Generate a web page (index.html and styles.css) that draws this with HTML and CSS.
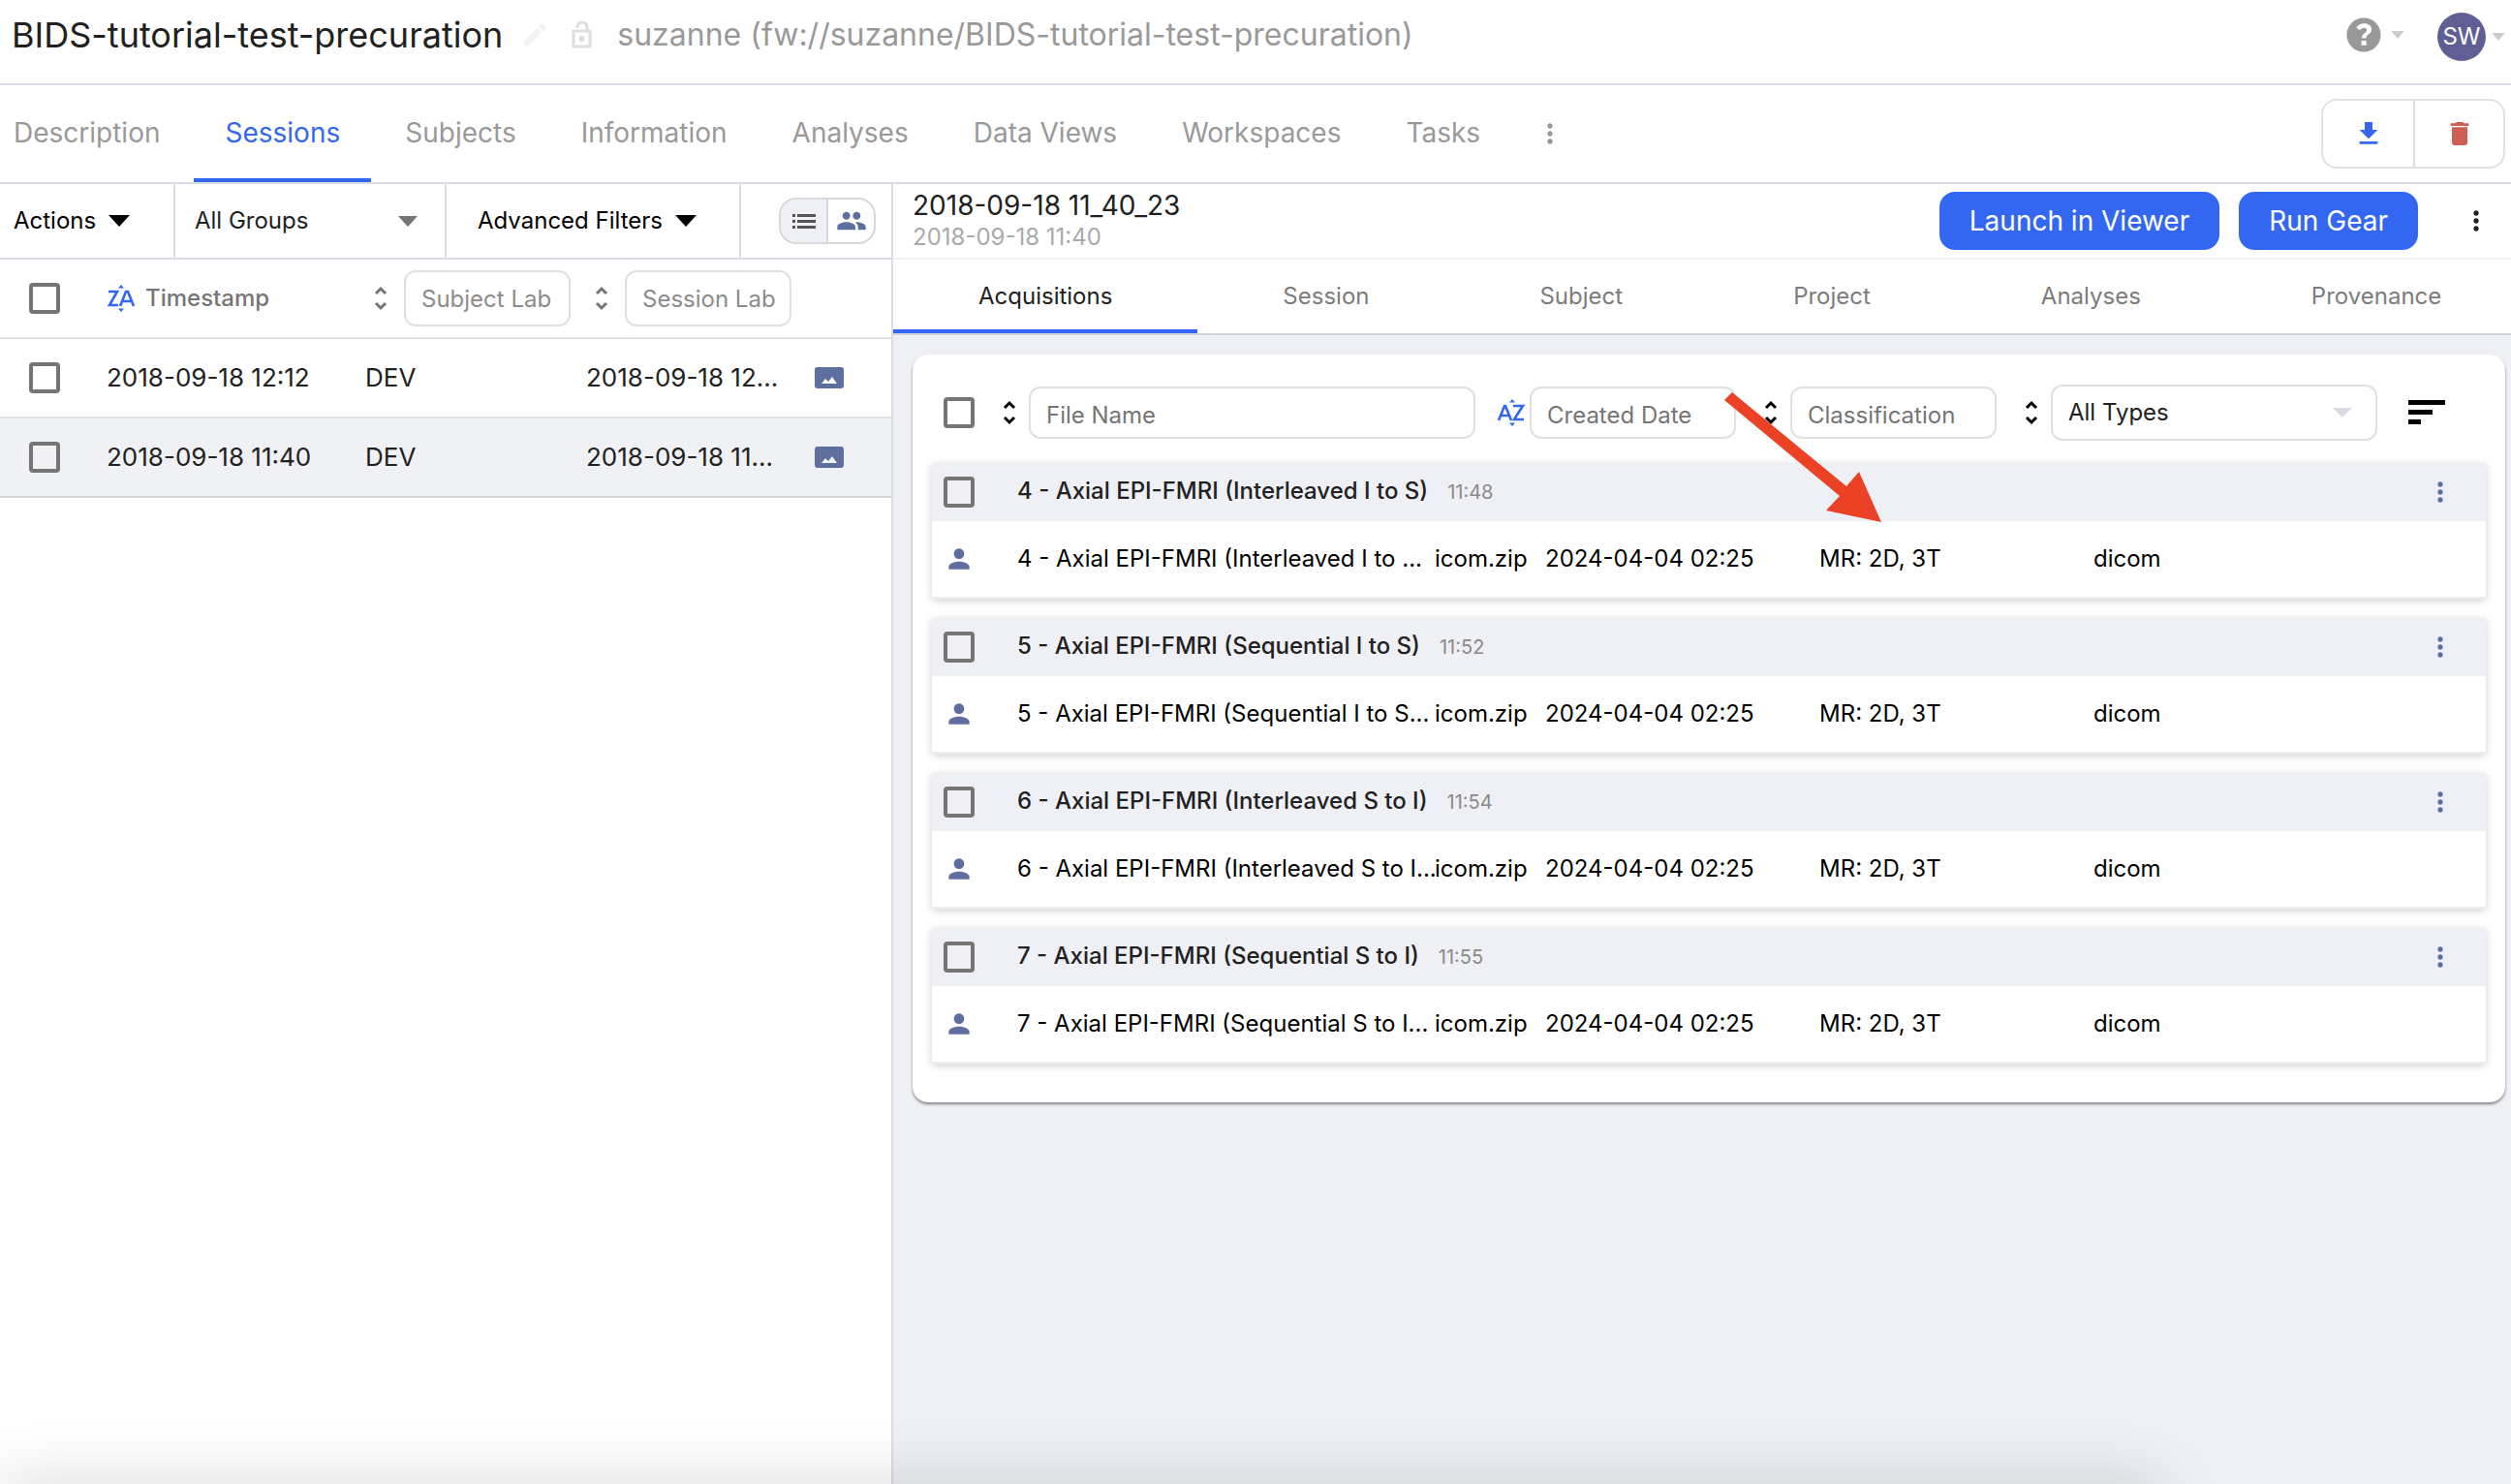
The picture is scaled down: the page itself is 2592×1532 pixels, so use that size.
FILE: index.html
```html
<!DOCTYPE html>
<html lang="en">
<head>
    <meta charset="UTF-8">
    <meta name="viewport" content="width=device-width, initial-scale=1">
    <title>BIDS-tutorial-test-precuration</title>
    <link rel="stylesheet" href="styles.css">
</head>
<body>

<!-- shared icons -->
<svg class="sprite" aria-hidden="true">
    <symbol id="i-dots" viewBox="0 0 24 24"><path d="M12 8c1.1 0 2-.9 2-2s-.9-2-2-2-2 .9-2 2 .9 2 2 2zm0 2c-1.1 0-2 .9-2 2s.9 2 2 2 2-.9 2-2-.9-2-2-2zm0 6c-1.1 0-2 .9-2 2s.9 2 2 2 2-.9 2-2-.9-2-2-2z"/></symbol>
    <symbol id="i-person" viewBox="0 0 24 24"><path d="M12 12c2.21 0 4-1.79 4-4s-1.79-4-4-4-4 1.79-4 4 1.79 4 4 4zm0 2c-2.67 0-8 1.34-8 4v2h16v-2c0-2.66-5.33-4-8-4z"/></symbol>
    <symbol id="i-sort" viewBox="0 0 16 28"><path d="M3 9l5-5 5 5M3 19l5 5 5-5" fill="none" stroke="currentColor" stroke-width="3"/></symbol>
    <symbol id="i-caret" viewBox="0 0 20 12"><path d="M0 0h20L10 12z"/></symbol>
    <symbol id="i-image" viewBox="0 0 30 22"><path fill-rule="evenodd" d="M3 0h24a3 3 0 0 1 3 3v16a3 3 0 0 1-3 3H3a3 3 0 0 1-3-3V3a3 3 0 0 1 3-3zm4 17h16l-5-7-4 5-3-3z"/></symbol>
</svg>

<header class="top">
    <h1>BIDS-tutorial-test-precuration</h1>
    <button class="icon-btn edit" aria-label="Edit"><svg width="30" height="30" viewBox="0 0 24 24"><path d="M3 17.25V21h3.75L17.81 9.94l-3.75-3.75L3 17.25zM20.71 7.04c.39-.39.39-1.02 0-1.41l-2.34-2.34c-.39-.39-1.02-.39-1.41 0l-1.83 1.83 3.75 3.75 1.83-1.83z"/></svg></button>
    <svg class="lock" width="24" height="30" viewBox="0 0 24 30"><path d="M7 8V7a5 5 0 0 1 10 0V11M3 11h17v16H3z" fill="none" stroke="currentColor" stroke-width="3" stroke-linejoin="round"/><circle cx="11.500" cy="19" r="3"/></svg>
    <span class="path">suzanne (fw://suzanne/BIDS-tutorial-test-precuration)</span>
    <button class="icon-btn help" aria-label="Help">
        <svg width="36" height="36" viewBox="0 0 24 24"><path d="M12 .3a11.7 11.7 0 1 0 0 23.4A11.7 11.7 0 0 0 12 .3zm1.8 18.9h-3.4v-3.2h3.4zm2.4-8.4c-1.300 1.500-2.500 1.500-2.500 3.500h-3.200c0-3.400 3.600-3.700 3.600-5.700 0-1-.8-1.500-1.900-1.500-1.200 0-2.100.7-2.800 1.700L6.900 7.100C8 5.300 9.800 4.200 12.300 4.200c2.900 0 5.100 1.500 5.100 4.100 0 1-.4 1.800-1.200 2.500z"/></svg>
        <svg class="small-caret" width="14" height="8"><use href="#i-caret"/></svg>
    </button>
    <button class="icon-btn user" aria-label="Account">
        <span class="avatar">SW</span>
        <svg class="small-caret" width="14" height="8"><use href="#i-caret"/></svg>
    </button>
</header>

<div class="nav-row">
    <nav class="main-nav">
        <a href="#">Description</a>
        <a href="#" class="cur">Sessions</a>
        <a href="#">Subjects</a>
        <a href="#">Information</a>
        <a href="#">Analyses</a>
        <a href="#">Data Views</a>
        <a href="#">Workspaces</a>
        <a href="#">Tasks</a>
    </nav>
    <button class="icon-btn more" aria-label="More tabs"><svg width="32" height="32"><use href="#i-dots"/></svg></button>
    <div class="btn-group">
        <button aria-label="Download"><svg class="blue" width="32" height="32" viewBox="0 0 24 24"><path d="M19 9h-4V3H9v6H5l7 7 7-7zM5 18v2h14v-2H5z"/></svg></button>
        <button aria-label="Delete"><svg class="red" width="32" height="32" viewBox="0 0 24 24"><path d="M6 19c0 1.100.9 2 2 2h8c1.100 0 2-.9 2-2V7H6v12zM19 4h-3.500l-1-1h-5l-1 1H5v2h14V4z"/></svg></button>
    </div>
</div>

<main>
    <section class="sessions">
        <div class="filters">
            <button class="actions">Actions <svg width="22" height="12" viewBox="0 0 20 12" preserveAspectRatio="none"><path d="M0 0h20L10 12z"/></svg></button>
            <div class="groups">
                <select aria-label="Group"><option>All Groups</option></select>
                <svg width="20" height="11" viewBox="0 0 20 12" preserveAspectRatio="none"><path d="M0 0h20L10 12z"/></svg>
            </div>
            <button class="advanced">Advanced Filters <svg width="22" height="12" viewBox="0 0 20 12" preserveAspectRatio="none"><path d="M0 0h20L10 12z"/></svg></button>
            <div class="toggle">
                <button class="on" aria-label="List view"><svg width="24" height="15" viewBox="0 0 24 15"><path d="M0 0h3v3H0zM5 0h19v3H5zM0 6h3v3H0zM5 6h19v3H5zM0 12h3v3H0zM5 12h19v3H5z"/></svg></button>
                <button aria-label="Subject view"><svg width="32" height="32" viewBox="0 0 24 24"><path d="M16 11c1.660 0 2.990-1.340 2.990-3S17.660 5 16 5c-1.660 0-3 1.340-3 3s1.340 3 3 3zm-8 0c1.660 0 2.990-1.340 2.990-3S9.660 5 8 5C6.340 5 5 6.340 5 8s1.340 3 3 3zm0 2c-2.330 0-7 1.170-7 3.500V19h14v-2.500c0-2.330-4.670-3.500-7-3.500zm8 0c-.29 0-.62.020-.97.050 1.160.84 1.970 1.970 1.970 3.450V19h6v-2.500c0-2.330-4.670-3.500-7-3.500z"/></svg></button>
            </div>
        </div>
        <table class="session-table">
            <colgroup><col class="c-check"><col class="c-time"><col class="c-subject"><col><col class="c-icon"></colgroup>
            <thead>
                <tr>
                    <th><input type="checkbox" aria-label="Select all sessions"></th>
                    <th>
                        <button class="sort-name"><svg class="az" width="30" height="30" viewBox="0 0 30 30"><path d="M2 8h9L3 22h9M14 23l6-15h2l6 15M17 18h8" fill="none" stroke="currentColor" stroke-width="2.600"/><path d="M12 4.500L15 1l3 3.500zM12 25.500h6L15 29z"/></svg>Timestamp</button>
                    </th>
                    <th><div class="filter"><button class="sort" aria-label="Sort by subject"><svg width="16" height="28"><use href="#i-sort"/></svg></button><input type="text" placeholder="Subject Lab" aria-label="Subject Label"></div></th>
                    <th><div class="filter"><button class="sort" aria-label="Sort by session"><svg width="16" height="28"><use href="#i-sort"/></svg></button><input type="text" placeholder="Session Lab" aria-label="Session Label"></div></th>
                    <th></th>
                </tr>
            </thead>
            <tbody>
                <tr>
                    <td><input type="checkbox" aria-label="Select session 12:12"></td>
                    <td>2018-09-18 12:12</td>
                    <td>DEV</td>
                    <td>2018-09-18 12...</td>
                    <td><svg width="30" height="22"><use href="#i-image"/></svg></td>
                </tr>
                <tr class="cur">
                    <td><input type="checkbox" aria-label="Select session 11:40"></td>
                    <td>2018-09-18 11:40</td>
                    <td>DEV</td>
                    <td>2018-09-18 11...</td>
                    <td><svg width="30" height="22"><use href="#i-image"/></svg></td>
                </tr>
            </tbody>
        </table>
    </section>

    <section class="detail">
        <div class="detail-head">
            <div class="detail-title">
                <h2>2018-09-18 11_40_23</h2>
                <p>2018-09-18 11:40</p>
            </div>
            <button class="primary">Launch in Viewer</button>
            <button class="primary">Run Gear</button>
            <button class="icon-btn detail-more" aria-label="More"><svg width="32" height="32"><use href="#i-dots"/></svg></button>
        </div>
        <nav class="detail-nav">
            <a href="#" class="cur">Acquisitions</a>
            <a href="#">Session</a>
            <a href="#">Subject</a>
            <a href="#">Project</a>
            <a href="#">Analyses</a>
            <a href="#">Provenance</a>
        </nav>

        <div class="card">
            <div class="file-filters">
                <input type="checkbox" aria-label="Select all files">
                <button class="sort" aria-label="Sort by name"><svg width="16" height="28"><use href="#i-sort"/></svg></button>
                <input type="text" class="file-name" placeholder="File Name" aria-label="File Name">
                <button class="sort-az" aria-label="Sort by date"><svg class="az" width="30" height="30" viewBox="0 0 30 30"><path d="M2 23L8 8h1l6 15M4 18h9M17 8h10L18 22h10" fill="none" stroke="currentColor" stroke-width="2.600"/><path d="M13 4.500L16 1l3 3.500zM13 25.500h6L16 29z"/></svg></button>
                <input type="text" placeholder="Created Date" aria-label="Created Date">
                <button class="sort" aria-label="Sort by classification"><svg width="16" height="28"><use href="#i-sort"/></svg></button>
                <input type="text" placeholder="Classification" aria-label="Classification">
                <button class="sort" aria-label="Sort by type"><svg width="16" height="28"><use href="#i-sort"/></svg></button>
                <div class="types">
                    <select aria-label="Type"><option>All Types</option></select>
                    <svg width="20" height="10" viewBox="0 0 20 12" preserveAspectRatio="none"><path d="M0 0h20L10 12z"/></svg>
                </div>
                <button class="icon-btn order" aria-label="Order"><svg width="38" height="26" viewBox="0 0 38 26"><path d="M0 0h38v5H0zM0 10h25v5H0zM0 20h13v5H0z"/></svg></button>
            </div>

            <article class="acq">
                <header>
                    <input type="checkbox" aria-label="Select acquisition 4">
                    <h3>4 - Axial EPI-FMRI (Interleaved I to S)</h3>
                    <time>11:48</time>
                    <button class="icon-btn" aria-label="More"><svg width="32" height="32"><use href="#i-dots"/></svg></button>
                </header>
                <table>
                    <colgroup><col class="f-icon"><col><col class="f-ext"><col class="f-date"><col class="f-class"><col class="f-type"></colgroup>
                    <tr><td><svg width="32" height="32"><use href="#i-person"/></svg></td><td>4 - Axial EPI-FMRI (Interleaved I to ...</td><td>icom.zip</td><td>2024-04-04 02:25</td><td>MR: 2D, 3T</td><td>dicom</td></tr>
                </table>
            </article>

            <article class="acq">
                <header>
                    <input type="checkbox" aria-label="Select acquisition 5">
                    <h3>5 - Axial EPI-FMRI (Sequential I to S)</h3>
                    <time>11:52</time>
                    <button class="icon-btn" aria-label="More"><svg width="32" height="32"><use href="#i-dots"/></svg></button>
                </header>
                <table>
                    <colgroup><col class="f-icon"><col><col class="f-ext"><col class="f-date"><col class="f-class"><col class="f-type"></colgroup>
                    <tr><td><svg width="32" height="32"><use href="#i-person"/></svg></td><td>5 - Axial EPI-FMRI (Sequential I to S...</td><td>icom.zip</td><td>2024-04-04 02:25</td><td>MR: 2D, 3T</td><td>dicom</td></tr>
                </table>
            </article>

            <article class="acq">
                <header>
                    <input type="checkbox" aria-label="Select acquisition 6">
                    <h3>6 - Axial EPI-FMRI (Interleaved S to I)</h3>
                    <time>11:54</time>
                    <button class="icon-btn" aria-label="More"><svg width="32" height="32"><use href="#i-dots"/></svg></button>
                </header>
                <table>
                    <colgroup><col class="f-icon"><col><col class="f-ext"><col class="f-date"><col class="f-class"><col class="f-type"></colgroup>
                    <tr><td><svg width="32" height="32"><use href="#i-person"/></svg></td><td>6 - Axial EPI-FMRI (Interleaved S to I...</td><td>icom.zip</td><td>2024-04-04 02:25</td><td>MR: 2D, 3T</td><td>dicom</td></tr>
                </table>
            </article>

            <article class="acq">
                <header>
                    <input type="checkbox" aria-label="Select acquisition 7">
                    <h3>7 - Axial EPI-FMRI (Sequential S to I)</h3>
                    <time>11:55</time>
                    <button class="icon-btn" aria-label="More"><svg width="32" height="32"><use href="#i-dots"/></svg></button>
                </header>
                <table>
                    <colgroup><col class="f-icon"><col><col class="f-ext"><col class="f-date"><col class="f-class"><col class="f-type"></colgroup>
                    <tr><td><svg width="32" height="32"><use href="#i-person"/></svg></td><td>7 - Axial EPI-FMRI (Sequential S to I...</td><td>icom.zip</td><td>2024-04-04 02:25</td><td>MR: 2D, 3T</td><td>dicom</td></tr>
                </table>
            </article>

            <!-- red pointer over the classification column -->
            <svg class="pointer" width="164" height="136" viewBox="0 0 164 136" aria-hidden="true"><path d="M8 0l118 97 13-15 23 52-57-12 14-15L0 8z"/></svg>
        </div>
    </section>
</main>
<div class="bottom-shade"></div>

</body>
</html>
```
FILE: styles.css
```css
*{
    box-sizing: border-box;
    margin: 0;
    padding: 0;
}
html,body{
    height: 100%;
}
body{
    display: flex;
    flex-direction: column;
    position: relative;
    overflow: hidden;
    font-family: Inter, "Liberation Sans", sans-serif;
    font-size: 24px;
    line-height: 32px;
    color: #212121;
    background-color: #fff;
}
a{
    text-decoration: none;
    color: inherit;
}
button,input,select{
    font: inherit;
    color: inherit;
    background: none;
    border: 0;
}
svg{
    display: block;
    fill: currentColor;
    flex: none;
}
h1,h2,h3,th{
    font-weight: 400;
}
.sprite{
    position: absolute;
    width: 0;
    height: 0;
}
.icon-btn{
    display: flex;
    align-items: center;
}
input[type="checkbox"]{
    appearance: none;
    -webkit-appearance: none;
    display: block;
    flex: none;
    width: 32px;
    height: 32px;
    border: 4px solid #757575;
    border-radius: 4px;
}
input[type="text"]{
    height: 54px;
    min-width: 0;
    padding: 4px 16px 0;
    border: 2px solid #e0e0e0;
    border-radius: 12px;
}
input::placeholder{
    color: #757575;
    opacity: 1;
}
select{
    appearance: none;
    -webkit-appearance: none;
    width: 100%;
    height: 100%;
}

/* top bar */
.top{
    display: flex;
    align-items: center;
    height: 88px;
    padding: 0 6px 14px 12px;
    border-bottom: 2px solid #d9dde8;
}
.top h1{
    font-size: 36px;
    line-height: 44px;
}
.edit{
    margin-left: 18px;
    color: #f2f2f2;
}
.lock{
    margin-left: 22px;
    color: #dedede;
}
.path{
    margin-left: 24px;
    font-size: 32px;
    color: #999;
}
.help{
    margin-left: auto;
    gap: 10px;
    color: #999;
}
.small-caret{
    color: #ccc;
}
.user{
    margin-left: 34px;
    padding-top: 4px;
    gap: 6px;
}
.avatar{
    width: 50px;
    height: 50px;
    line-height: 50px;
    border-radius: 50%;
    color: #fff;
    background-color: #5f5f96;
}

/* project tabs */
.nav-row{
    display: flex;
    align-items: center;
    height: 102px;
    padding-right: 6px;
    border-bottom: 2px solid #d6dbe4;
}
.main-nav{
    display: flex;
    align-self: stretch;
    gap: 3px;
    font-size: 28px;
    color: #999;
}
.main-nav a{
    padding: 0 32px;
    line-height: 98px;
}
.main-nav a:first-child{
    padding-left: 14px;
}
.main-nav .cur{
    color: #3367f1;
    border-bottom: 4px solid #3367f1;
}
.more{
    margin-left: 24px;
    color: #999;
}
.btn-group{
    display: flex;
    margin-left: auto;
    height: 72px;
    border: 2px solid #e0e0e0;
    border-radius: 16px;
}
.btn-group button{
    display: flex;
    align-items: center;
    justify-content: center;
    width: 93px;
}
.btn-group button + button{
    border-left: 2px solid #e0e0e0;
}
.blue{
    color: #3367f1;
}
.red{
    color: #cd6052;
}

main{
    display: flex;
    flex: 1;
    min-height: 0;
}

/* left column */
.sessions{
    width: 922px;
    flex: none;
    border-right: 2px solid #d9dde8;
}
.filters{
    display: flex;
    height: 78px;
    border-bottom: 2px solid #d6dbe4;
    color: #000;
}
.actions,.advanced{
    display: flex;
    align-items: center;
    gap: 13px;
    border-right: 2px solid #d9dde8;
}
.actions{
    width: 181px;
    padding-left: 14px;
}
.advanced{
    width: 304px;
    padding-left: 32px;
}
.groups{
    display: flex;
    align-items: center;
    width: 280px;
    padding-right: 28px;
    border-right: 2px solid #d9dde8;
    color: #757575;
}
.groups select{
    padding-left: 20px;
    color: #212121;
}
.toggle{
    display: flex;
    align-self: center;
    width: 100px;
    height: 48px;
    margin: 0 16px 0 auto;
    border: 2px solid #d8d8da;
    border-radius: 18px;
    overflow: hidden;
}
.toggle button{
    display: flex;
    flex: 1;
    align-items: center;
    justify-content: center;
    color: #5c6f9f;
}
.toggle .on{
    color: #555;
    background-color: #eef0f5;
    border-right: 2px solid #d8d8da;
}
.session-table{
    width: 100%;
    table-layout: fixed;
    border-collapse: separate;
    border-spacing: 0;
}
.c-check{
    width: 110px;
}
.c-time{
    width: 267px;
}
.c-subject{
    width: 228px;
}
.c-icon{
    width: 79px;
}
.session-table th,.session-table td{
    height: 82px;
    text-align: left;
    border-bottom: 2px solid #e0e0e0;
}
.session-table td{
    font-size: 26px;
    white-space: nowrap;
}
.session-table th:first-child,.session-table td:first-child{
    padding-left: 30px;
}
.session-table .cur td{
    background-color: #f0f1f4;
    border-bottom-color: #d3d4d8;
}
.session-table td svg{
    color: #5c6f9f;
}
.session-table th{
    color: #757575;
}
.sort-name{
    display: flex;
    align-items: center;
    gap: 10px;
    font-weight: 500;
}
.az{
    color: #3367f1;
}
.filter{
    display: flex;
    align-items: center;
    gap: 16px;
    padding-left: 8px;
}
.filter input[type="text"]{
    width: 172px;
    height: 58px;
    padding: 0 12px 0 16px;
}
.filter input::placeholder{
    color: #8c8c8c;
}

/* right column */
.detail{
    flex: 1;
    min-width: 0;
    background-color: #eff0f5;
}
.detail-head{
    display: flex;
    align-items: center;
    gap: 20px;
    height: 78px;
    padding: 0 20px;
    background-color: #fff;
    border-bottom: 2px solid #eff0f5;
}
.detail-title{
    flex: 1;
    padding-bottom: 2px;
}
.detail-title h2{
    font-size: 28px;
    line-height: 36px;
}
.detail-title p{
    line-height: 30px;
    color: #aaa;
}
.primary{
    height: 60px;
    padding: 0 31px;
    font-size: 28px;
    border-radius: 16px;
    color: #fff;
    background-color: #3367f1;
}
.detail-more{
    margin-left: 24px;
}
.detail-nav{
    display: flex;
    height: 78px;
    background-color: #fff;
    border-bottom: 2px solid #d1d2d8;
    color: #7c7c7c;
}
.detail-nav a{
    padding: 0 88px;
    line-height: 76px;
}
.detail-nav a:last-child{
    flex: 1;
    padding-right: 0;
}
.detail-nav .cur{
    color: #212121;
    border-bottom: 4px solid #3367f1;
}
.card{
    position: relative;
    margin: 20px 6px 20px 20px;
    padding: 22px 20px 40px;
    border-radius: 16px;
    background-color: #fff;
    box-shadow: 0 2px 3px rgba(0,0,0,0.45);
}
.file-filters{
    display: flex;
    align-items: center;
    height: 76px;
    padding: 0 42px 0 12px;
    margin-bottom: 14px;
    color: #000;
}
.sort{
    flex: none;
}
.file-filters .sort{
    margin: 0 12px 0 28px;
}
.file-filters input[type="text"]{
    width: 213px;
}
.file-filters input.file-name{
    flex: 1;
}
.sort-az{
    margin: 0 4px 0 22px;
}
.types{
    display: flex;
    align-items: center;
    width: 337px;
    height: 58px;
    padding-right: 24px;
    border: 2px solid #e0e0e0;
    border-radius: 12px;
    color: #d6dbe6;
}
.types select{
    padding-left: 16px;
    color: #212121;
}
.order{
    margin-left: 32px;
}
.acq{
    margin-bottom: 20px;
    background-color: #fff;
    border-bottom: 2px solid #eeeff4;
    box-shadow: 0 2px 8px rgba(0,0,0,0.18);
}
.acq:last-of-type{
    margin-bottom: 0;
}
.acq header{
    display: flex;
    align-items: center;
    height: 60px;
    padding: 0 31px 0 12px;
    background-color: #eff0f5;
}
.acq h3{
    margin: 0 20px 0 44px;
    padding-bottom: 2px;
    font-size: 24px;
    font-weight: 500;
}
.acq time{
    font-size: 20px;
    color: #8a8a8a;
}
.acq .icon-btn{
    margin-left: auto;
    color: #5c6f9f;
}
.acq table{
    width: 100%;
    table-layout: fixed;
    border-collapse: collapse;
    color: #000;
}
.acq td{
    height: 78px;
    white-space: nowrap;
}
.acq td:first-child{
    padding-left: 12px;
    color: #5c6f9f;
}
.f-icon{
    width: 88px;
}
.f-ext{
    width: 114px;
}
.f-date,.f-class{
    width: 283px;
}
.f-type{
    width: 405px;
}
.pointer{
    position: absolute;
    top: 39px;
    right: 642px;
    color: #eb4226;
}
.bottom-shade{
    position: absolute;
    top: 100%;
    left: 0;
    width: 86%;
    height: 60px;
    box-shadow: 0 0 70px rgba(0,0,0,0.16);
}
```
